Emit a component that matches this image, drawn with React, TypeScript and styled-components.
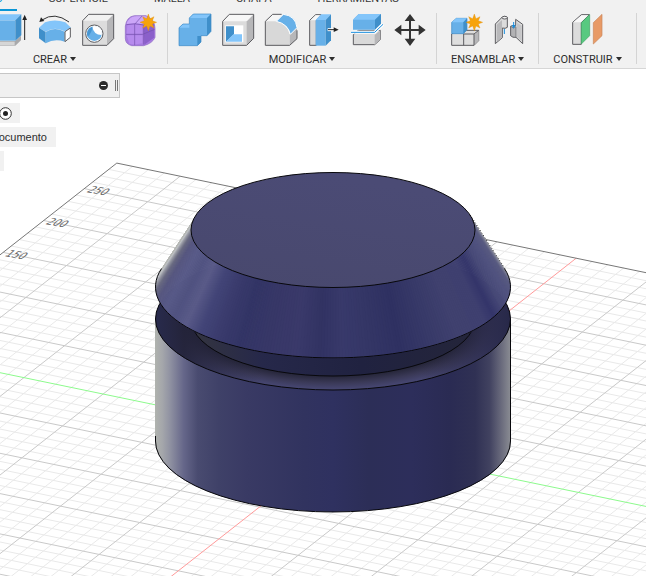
import React from "react";
import styled, { createGlobalStyle } from "styled-components";

const GlobalStyle = createGlobalStyle`
  * { box-sizing: border-box; }
  body { margin: 0; background: #fff; font-family: Roboto, "Liberation Sans", sans-serif; font-size: 11px; color: #2d2d2d; }
  button { font: inherit; color: inherit; border: 0; padding: 0; background: none; }
`;

const Shell$ = styled.div`
  display: flex;
  flex-direction: column;
  height: 100vh;
  overflow: hidden;
`;

const Header = styled.header`
  flex: none;
  background: #f1f1f1;
  border-bottom: 1px solid #d6d6d6;
  padding-bottom: 4px;
  overflow: hidden;
`;

const Tabs = styled.nav`
  display: flex;
  align-items: flex-end;
  gap: 18px;
  height: 11px;
  margin-left: -49px;
  overflow: hidden;
`;

const Tab = styled.button<{ $active?: boolean }>`
  flex: none;
  line-height: 13px;
  padding: 0 14px 4px;
  color: ${(p) => (p.$active ? "#0a96d6" : "#3a3a3a")};
  border-bottom: 2px solid ${(p) => (p.$active ? "#0a96d6" : "transparent")};
`;

const Ribbon = styled.div`
  display: flex;
  margin: 2px 0 0 -58px;
`;

const Group = styled.section`
  flex: none;
  display: flex;
  flex-direction: column;
  align-items: center;
  padding: 0 5px;
  height: 51px;
  border-right: 1px solid #d4d4d4;
`;

const Tools = styled.div`
  display: flex;
`;

const Tool = styled.button`
  display: flex;
  justify-content: center;
  width: 43px;
  height: 34px;
`;

const ToolIcon = styled.svg`
  width: 34px;
  height: 34px;
  stroke-linejoin: round;
  stroke-width: 4;
`;

const GroupLabel = styled.button`
  display: flex;
  align-items: center;
  gap: 3px;
  padding: 0 9px;
  margin-top: 5px;
  line-height: 16px;
`;

const Caret = styled.span`
  border: 3px solid transparent;
  border-top: 4px solid #2d2d2d;
  border-bottom: 0;
  margin-bottom: 2px;
`;

const Viewport = styled.main`
  flex: 1;
  min-height: 0;
  display: grid;
  grid-template: 1fr / 1fr;
  overflow: hidden;
`;

const Scene = styled.svg`
  grid-area: 1 / 1;
  width: 100%;
  height: 100%;
  min-height: 0;
`;

const Browser = styled.aside`
  grid-area: 1 / 1;
  z-index: 1;
  justify-self: start;
  align-self: start;
  display: flex;
  flex-direction: column;
  align-items: flex-start;
  gap: 4px;
  padding-top: 4px;
`;

const BrowserBar = styled.div`
  display: flex;
  align-items: center;
  justify-content: flex-end;
  gap: 7px;
  width: 120px;
  height: 25px;
  margin-bottom: 1px;
  padding-right: 1px;
  background: #f0f0f0;
  border: 1px solid #c6c6c6;
  border-left: 0;
`;

const Grip = styled.span`
  width: 3px;
  height: 11px;
  border: 1px solid #777;
  border-width: 0 1px;
`;

const Round = styled.button`
  display: flex;
`;

const Node = styled.div<{ $w: number; $pad?: number }>`
  display: flex;
  align-items: center;
  justify-content: flex-end;
  width: ${(p) => p.$w}px;
  height: 20px;
  padding-right: ${(p) => p.$pad ?? 0}px;
  background: #f1f1f1;
  overflow: hidden;
  white-space: nowrap;
  font-family: "Liberation Sans", Arial, sans-serif;
`;

const S = "#5c5c60";

const Extrude = () => (
  <ToolIcon viewBox="-15 39 102 102">
    <path d="M-20 122H46L63 107V121L46 137H-20Z" fill="#a9a9ab" />
    <path d="M-20 125H44V136H-20Z" fill="#d6d6d6" />
    <path d="M-20 61H46V122H-20Z" fill="#67b0e8" />
    <path d="M-20 61L-4 43H64L46 61Z" fill="#83c5fa" />
    <path d="M46 61L64 43V106L46 122Z" fill="#3f8fca" />
    <path d="M74 120V55" stroke="#222" strokeWidth="3" />
    <path d="M74 44L81 60H67Z" fill="#222" />
  </ToolIcon>
);

const Bend = () => (
  <ToolIcon viewBox="114 39 102 102">
    <path d="M117 83L135 67Q164 56 196 67L213 83L194 94Q164 78 137 95Z" fill="#83c5fa" />
    <path d="M117 83L137 96V130L117 115Z" fill="#3f8fca" />
    <path d="M137 96Q164 78 194 95V125Q164 114 137 130Z" fill="#67b0e8" />
    <path d="M195 95L211 84V112L195 125Z" fill="#fff" stroke={S} strokeWidth="3" />
    <path d="M207 66Q164 34 126 60" fill="none" stroke="#333" strokeWidth="3" />
    <path d="M118 66L123 52L133 63Z" fill="#222" />
  </ToolIcon>
);

const Hole = () => (
  <ToolIcon viewBox="243 39 102 102">
    <path d="M248 62L266 43H341V116L321 136H248Z" fill="#dcdcdc" />
    <path d="M321 62L341 43V116L321 136Z" fill="#b7b7b9" />
    <path d="M248 62L266 43H341L321 62Z" fill="#f2f2f2" />
    <path d="M248 62L266 43H341V116L321 136H248Z" fill="none" stroke={S} strokeWidth="3" />
    <circle cx="283" cy="101" r="26" fill="#fff" stroke={S} strokeWidth="3" />
    <circle cx="283" cy="101" r="22" fill="#67b0e8" />
    <path d="M277 79A22 22 0 0 1 305 105Q280 105 277 79Z" fill="#fff" />
    <path d="M277 80A22 22 0 0 0 263 110Q276 98 277 80Z" fill="#4795d1" />
  </ToolIcon>
);

const Star = ({ x, y }: { x: number; y: number }) => (
  <path
    transform={`translate(${x} ${y})`}
    d="M0-25L5-11L17-17L12-5L25 0L12 5L17 17L5 11L0 25L-5 11L-17 17L-12 5L-25 0L-12-5L-17-17L-5-11Z"
    fill="#f7a30b"
    stroke="#df8d08"
    strokeWidth="1"
  />
);

const Form = () => (
  <ToolIcon viewBox="372 39 102 102">
    <path d="M376 78Q380 50 403 47H438Q465 60 465 85V112Q458 130 431 137H395Q376 132 376 115Z" fill="#a77be0" />
    <path d="M379 72Q388 48 410 48H444L430 73Q404 68 379 72Z" fill="#cba6f8" />
    <path d="M431 75L462 66V113L433 134Z" fill="#8b60ca" />
    <path d="M382 76Q403 71 427 76V102H380Z M380 106H427V130Q405 136 388 131Z" fill="#b68bed" />
    <path d="M378 103H428L464 88M404 136V73L426 48M379 74Q405 68 431 75V134" fill="none" stroke="#7350ac" strokeWidth="2" />
    <path d="M376 78Q380 50 403 47H438Q465 60 465 85V112Q458 130 431 137H395Q376 132 376 115Z" fill="none" stroke="#8b65c2" strokeWidth="2" />
    <Star x={445} y={67} />
  </ToolIcon>
);

const Combine = () => (
  <ToolIcon viewBox="39 39 102 102">
    <path d="M42 83L54 72H73V54L85 42H138V94L126 107H108V126L97 137H42Z" fill="#67b0e8" />
    <path d="M42 83L54 72H73V83ZM73 54L85 42H138L126 54Z" fill="#83c5fa" />
    <path d="M126 54L138 42V94L126 107ZM97 108H108V126L97 137Z" fill="#3f8fca" />
    <path d="M42 83L54 72H73V54L85 42H138V94L126 107H108V126L97 137H42Z" fill="none" stroke="#3b8ac5" strokeWidth="2" />
  </ToolIcon>
);

const Shell = () => (
  <ToolIcon viewBox="168 39 102 102">
    <path d="M173 64L193 43H266V115L245 136H173Z" fill="#dcdcdc" />
    <path d="M245 64L266 43V115L245 136Z" fill="#b7b7b9" />
    <path d="M173 64L193 43H266L245 64Z" fill="#f7f7f7" />
    <path d="M173 64L193 43H266V115L245 136H173Z" fill="none" stroke={S} strokeWidth="3" />
    <path d="M181 76H235V127H181Z" fill="#fff" />
    <path d="M183 79H207V103L183 125Z" fill="#3f8fca" />
    <path d="M205 103H231V125H183Z" fill="#83c5fa" />
  </ToolIcon>
);

const Fillet = () => (
  <ToolIcon viewBox="297 39 102 102">
    <path d="M301 64L323 43H350Q392 53 396 91V116L374 136H301Z" fill="#f6f6f6" />
    <path d="M301 64H337Q366 72 374 103V136H301Z" fill="#d8d8d8" />
    <path d="M374 103L396 82V116L374 136Z" fill="#b7b7b9" />
    <path d="M334 64L355 43Q392 47 396 83L376 103Q369 72 334 64Z" fill="#67b0e8" stroke="#fff" strokeWidth="3" />
    <path d="M350 43H323L301 64V136H374L396 116V91" fill="none" stroke={S} strokeWidth="3" />
  </ToolIcon>
);

const PressPull = () => (
  <ToolIcon viewBox="36 39 102 102">
    <path d="M44 61L62 44H78L64 62V136H44Z" fill="#d9d9d9" stroke={S} strokeWidth="3" />
    <path d="M46 61L62 46H76L62 61Z" fill="#f8f8f8" />
    <path d="M62 60H92V137H62Z" fill="#67b0e8" />
    <path d="M62 60L78 43H108L92 60Z" fill="#83c5fa" />
    <path d="M92 60L108 43V121L92 137Z" fill="#3f8fca" />
    <path d="M98 89H120" stroke="#fff" strokeWidth="9" />
    <path d="M99 89H120" stroke="#222" strokeWidth="3" />
    <path d="M131 89L116 82V96Z" fill="#222" />
  </ToolIcon>
);

const Split = () => (
  <ToolIcon viewBox="165 39 102 102">
    <path d="M175 104L190 91H256V119L239 134H175Z" fill="#d9d9d9" stroke={S} strokeWidth="3" />
    <path d="M239 105L256 91V119L239 134Z" fill="#b7b7b9" />
    <path d="M174 59L191 42H258V71L240 89H174Z" fill="#67b0e8" />
    <path d="M174 59L191 42H258L240 59Z" fill="#83c5fa" />
    <path d="M240 59L258 42V71L240 89Z" fill="#3f8fca" />
    <path d="M168 97H239L264 73" fill="none" stroke="#fff" strokeWidth="9" />
    <path d="M168 97H239L264 73" fill="none" stroke="#168dde" strokeWidth="3" />
  </ToolIcon>
);

const Move = () => (
  <ToolIcon viewBox="294 39 102 102">
    <path d="M345 55V125M312 90H378" stroke="#333" strokeWidth="6" />
    <path d="M345 42L361 63H329ZM345 138L361 116H329ZM298 90L319 74V106ZM392 90L371 74V106Z" fill="#333" />
  </ToolIcon>
);

const NewComponent = () => (
  <ToolIcon viewBox="57 39 102 102">
    <path d="M65 102L80 91H146V122L132 136H65Z" fill="#dedede" stroke={S} strokeWidth="3" />
    <path d="M132 105L146 91V122L132 136Z" fill="#b7b7b9" />
    <path d="M101 101V136M101 102H132L146 91M132 102V136" fill="none" stroke={S} strokeWidth="3" />
    <path d="M65 67L79 55H111V89L100 101H65Z" fill="#67b0e8" stroke="#3b8ac5" strokeWidth="2" />
    <path d="M65 67L79 55H111L100 67Z" fill="#83c5fa" />
    <path d="M100 67L111 55V89L100 101Z" fill="#3f8fca" />
    <Star x={133} y={67} />
  </ToolIcon>
);

const Joint = () => (
  <ToolIcon viewBox="189 39 102 102">
    <path d="M199 72L220 51Q228 46 235 52V82Q229 87 220 84V113L199 131Z" fill="#dcdcdc" stroke={S} strokeWidth="3" />
    <path d="M203 74L219 60V112L203 126Z" fill="#b9b9bb" />
    <ellipse cx="227" cy="53" rx="8" ry="4" fill="#f2f2f2" stroke={S} strokeWidth="3" />
    <path d="M281 131L261 112Q251 113 245 107V79Q249 75 260 77V58L281 73Z" fill="#dcdcdc" stroke={S} strokeWidth="3" />
    <path d="M264 68L278 77V124L264 111Z" fill="#c6c6c8" />
    <path d="M245 79Q252 88 261 80V112Q251 113 245 107Z" fill="#b2b2b4" stroke={S} strokeWidth="2" />
    <path d="M226 87V102M254 66V79" stroke="#168dde" strokeWidth="3" />
    <path d="M254 86L248 76H260Z" fill="#168dde" />
  </ToolIcon>
);

const Plane = () => (
  <ToolIcon viewBox="420 39 102 102">
    <path d="M428 67L454 44H478L454 68V133H428Z" fill="#dcdcdc" stroke={S} strokeWidth="3" />
    <path d="M430 67L455 46H475L452 67Z" fill="#f8f8f8" />
    <path d="M454 68L479 44V107L454 132Z" fill="#58c980" stroke="#41a565" strokeWidth="2" />
    <path d="M490 68L516 43V107L490 132Z" fill="#e89a66" stroke="#c9875c" strokeWidth="2" />
  </ToolIcon>
);

const GROUPS = [
  { label: "CREAR", tools: [Extrude, Extrude, Bend, Hole, Form] },
  { label: "MODIFICAR", tools: [Combine, Shell, Fillet, PressPull, Split, Move] },
  { label: "ENSAMBLAR", tools: [NewComponent, Joint] },
  { label: "CONSTRUIR", tools: [Plane] },
];

const TABS = ["SÓLIDO", "SUPERFICIE", "MALLA", "CHAPA", "HERRAMIENTAS"];

/* Ground grid: O is the origin, U and V are one 50 mm step along each axis. */
const O = [340.7, 443.2];
const U = [79.2, 16.4];
const V = [-40.6, 31.9];
const EDGE = -5.8;
const at = (u: number, v: number) =>
  `${(O[0] + u * U[0] + v * V[0]).toFixed(1)} ${(O[1] + u * U[1] + v * V[1]).toFixed(1)}`;
const alongU = (v: number) => `M${at(EDGE, v)}L${at(12, v)}`;
const alongV = (u: number) => `M${at(u, EDGE)}L${at(u, 14)}`;

const minor: string[] = [];
const major: string[] = [];
for (let i = -28; i <= 60; i++) {
  const bucket = i % 5 === 0 ? major : minor;
  if (i !== 0) bucket.push(alongU(i / 5), alongV(i / 5));
}

/* Cone side, shaded by angle: 0 is the right, 90 the front, 180 the left. */
const CONE: [number, string][] = [
  [-15, "#b9bbbf"], [-9, "#85879a"], [-2, "#595b80"], [8, "#50527f"], [17, "#484a78"],
  [25, "#34356a"], [31, "#3f4070"], [45, "#40416f"], [56, "#383a69"], [68, "#2f3162"],
  [78, "#343666"], [87, "#38396b"], [94, "#313363"], [102, "#3a396a"], [113, "#373767"],
  [122, "#333566"], [130, "#393a6c"], [139, "#434578"], [147, "#5a5b89"], [154, "#505281"],
  [162, "#585a88"], [171, "#56567f"], [178, "#686980"], [184, "#9b9da6"], [189, "#c2c5c9"], [195, "#b4b6b2"],
];
const channels = (hex: string) => [1, 3, 5].map((i) => parseInt(hex.slice(i, i + 2), 16));
const coneColour = (a: number) => {
  const i = Math.max(1, CONE.findIndex(([s]) => s >= a));
  const [a0, c0] = CONE[i - 1];
  const [a1, c1] = CONE[i];
  const t = Math.min(1, Math.max(0, (a - a0) / (a1 - a0)));
  const e = channels(c1);
  return `rgb(${channels(c0).map((c, k) => Math.round(c + (e[k] - c) * t)).join(",")})`;
};
const rim = (a: number, rx: number, ry: number, cy: number) => {
  const r = (a * Math.PI) / 180;
  return `${(333 + rx * Math.cos(r)).toFixed(1)} ${(cy + ry * Math.sin(r)).toFixed(1)}`;
};
const slices = Array.from({ length: 210 }, (_, i) => {
  const a = i - 15;
  const b = a + 1;
  return {
    d: `M${rim(a, 141, 57, 230)}L${rim(b, 141, 57, 230)}L${rim(b, 177, 71, 287)}L${rim(a, 177, 71, 287)}Z`,
    fill: coneColour(a + 0.5),
  };
});

const BASE: [number, string][] = [
  [0, "#b0b3ae"], [2, "#a5a7ab"], [4, "#9294a3"], [8, "#66678a"], [12, "#494b70"], [18, "#3f4168"],
  [26, "#393a64"], [42, "#31335f"], [50, "#2f3160"], [60, "#2c2e57"], [72, "#2d2e5b"],
  [83, "#2a2b53"], [90, "#303154"], [94, "#414260"], [97, "#66677a"], [100, "#8c8e94"],
];

const Model = () => (
  <g>
    <defs>
      <linearGradient id="base">
        {BASE.map(([o, c]) => <stop key={o} offset={`${o}%`} stopColor={c} />)}
      </linearGradient>
      <radialGradient id="ledge">
        <stop offset="80%" stopColor="#252538" />
        <stop offset="90%" stopColor="#3a3957" />
        <stop offset="98%" stopColor="#45456f" />
      </radialGradient>
      <linearGradient id="ledgeSide">
        <stop offset="0" stopColor="#282a4c" />
        <stop offset="8%" stopColor="#222238" stopOpacity=".9" />
        <stop offset="30%" stopColor="#222238" stopOpacity="0" />
        <stop offset="75%" stopColor="#222238" stopOpacity="0" />
        <stop offset="92%" stopColor="#2a2a4b" stopOpacity=".7" />
        <stop offset="1" stopColor="#272848" />
      </linearGradient>
      <linearGradient id="neck">
        <stop offset="0" stopColor="#34353f" />
        <stop offset="25%" stopColor="#26284a" />
        <stop offset="60%" stopColor="#202240" />
        <stop offset="100%" stopColor="#24253a" />
      </linearGradient>
      <linearGradient id="cap" x1="0" y1="1" x2=".4" y2="0">
        <stop offset="0" stopColor="#48486d" />
        <stop offset="1" stopColor="#4b4b75" />
      </linearGradient>
    </defs>
    <path d="M155 319V441A178 71 0 0 0 511 441V319Z" fill="url(#base)" />
    <path d="M155.500 436V441A177.500 71 0 0 0 510.500 441V319" fill="none" stroke="#08080c" />
    <ellipse cx="333" cy="319" rx="177.500" ry="71" fill="url(#ledge)" />
    <ellipse cx="333" cy="319" rx="177.500" ry="71" fill="url(#ledgeSide)" stroke="#08080c" />
    <path d="M191 290V319A142 57 0 0 0 475 319V290Z" fill="url(#neck)" />
    <path d="M191 319A142 57 0 0 0 475 319" fill="none" stroke="#08080c" />
    {slices.map((s) => <path key={s.d} d={s.d} fill={s.fill} stroke={s.fill} />)}
    <path d={`M${rim(195, 177.5, 71, 287)}A177.500 71 0 1 0 ${rim(-15, 177.5, 71, 287)}`} fill="none" stroke="#08080c" />
    <path d={`M${rim(-15, 142, 58, 230)}L${rim(-15, 178, 71, 287)}`} stroke="#222" strokeDasharray="1 2" />
    <ellipse cx="333" cy="230" rx="142" ry="57.500" fill="url(#cap)" stroke="#08080c" />
  </g>
);

const MARKS = [
  { text: "250", x: 86, y: 192 },
  { text: "200", x: 45, y: 224 },
  { text: "150", x: 4, y: 256 },
];

export default function App() {
  return (
    <Shell$>
      <GlobalStyle />
      <Header>
        <Tabs>
          {TABS.map((t, i) => <Tab key={t} $active={i === 0}>{t}</Tab>)}
        </Tabs>
        <Ribbon>
          {GROUPS.map((g) => (
            <Group key={g.label}>
              <Tools>
                {g.tools.map((Icon, i) => <Tool key={i} aria-label={`${g.label} ${i + 1}`}><Icon /></Tool>)}
              </Tools>
              <GroupLabel>{g.label}<Caret /></GroupLabel>
            </Group>
          ))}
        </Ribbon>
      </Header>
      <Viewport>
        <Scene viewBox="0 69 646 507" preserveAspectRatio="xMinYMin slice">
          <path d={minor.join("")} stroke="#e9e9e9" fill="none" />
          <path d={major.join("")} stroke="#c9c9c9" fill="none" />
          <path d={alongV(0)} stroke="#ff9a9a" />
          <path d={alongU(0)} stroke="#8dfa8d" />
          <path d={`M${at(EDGE, 14)}L${at(EDGE, EDGE)}L${at(12, EDGE)}`} stroke="#777" fill="none" />
          {MARKS.map((m) => (
            <text
              key={m.text}
              transform={`translate(${m.x} ${m.y}) rotate(10) skewX(-38)`}
              fontFamily="DejaVu Sans, sans-serif"
              fontSize="10"
              fill="#666"
            >
              {m.text}
            </text>
          ))}
          <Model />
        </Scene>
        <Browser>
          <BrowserBar>
            <Round aria-label="Contraer">
              <svg width="9" height="9" viewBox="0 0 9 9">
                <circle cx="4.5" cy="4.5" r="4.5" fill="#2b2b2b" />
                <path d="M2 4.5H7" stroke="#fff" />
              </svg>
            </Round>
            <Grip />
          </BrowserBar>
          <Node $w={20} $pad={8}>
            <Round aria-label="Activar">
              <svg width="13" height="13" viewBox="0 0 13 13">
                <circle cx="6.5" cy="6.5" r="5.8" fill="#fff" stroke="#333" />
                <circle cx="6.5" cy="6.5" r="2.5" fill="#222" />
              </svg>
            </Round>
          </Node>
          <Node $w={56} $pad={9}>Documento</Node>
          <Node $w={4} />
        </Browser>
      </Viewport>
    </Shell$>
  );
}
